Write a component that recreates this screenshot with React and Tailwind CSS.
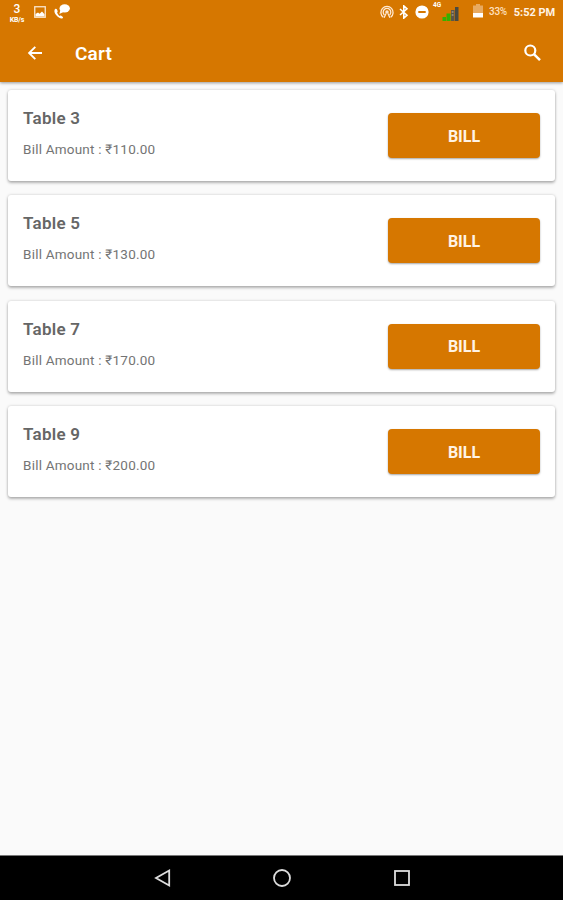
import React from 'react';

const tables = [
    { name: 'Table 3', amount: '110.00' },
    { name: 'Table 5', amount: '130.00' },
    { name: 'Table 7', amount: '170.00' },
    { name: 'Table 9', amount: '200.00' }
];

const StatusBar = () => (
    <div className="flex h-6 items-start justify-between pl-[9px] pr-2 text-white">
        <div className="flex items-start">
            <div className="flex w-4 flex-col items-center pt-[2px]">
                <span className="text-[12px] leading-[14px] font-medium">3</span>
                <span className="text-[7px] leading-[8px] font-bold -tracking-[0.1px] -mt-[1px] pt-[1px]">KB/s</span>
            </div>
            <svg className="mt-[6px] ml-[9px] h-3 w-3" viewBox="0 0 12 12" fill="none">
                <rect x="0.75" y="0.75" width="10.5" height="10.5" stroke="#fbe6cf" strokeWidth="1.3" />
                <path d="M1.500 10.500V8l2.500-1.500 1.600 1.300L8 5.500l2.500 2.700v2.300z" fill="#fff" />
            </svg>
            <svg className="mt-1 ml-2 h-[15px] w-4" viewBox="0 0 16 15" fill="#fff">
                <path d="M1.2 5C-.1 6 .2 8.600 2.100 11c2 2.500 4.300 3.700 6.100 3.400 1-.2 1-1.100.4-1.600l-1.300-1c-.6-.4-1-.2-1.500.2C4.600 11.400 3.500 10 3.100 8.500c.4-.4.7-.7.500-1.400L3 5.600C2.600 4.800 2 4.500 1.200 5z" />
                <ellipse cx="10.700" cy="4.400" rx="5.200" ry="4.100" />
                <path d="M6.300 6 5.400 9.900 9.500 8z" />
            </svg>
        </div>
        <div className="flex items-start">
            <svg className="mt-[5px] h-[14px] w-[14px]" viewBox="0 0 14 14" fill="none" stroke="#ffe9d2" strokeWidth="1.300">
                <path d="M3.300 12.300a6.100 6.100 0 1 1 7.400 0" />
                <path d="M4.400 10a3.800 3.800 0 1 1 5.200 0" />
                <circle cx="7" cy="7" r="1.100" fill="#ffe9d2" />
                <path d="M6 8.500 4.100 12.800M8 8.500l1.900 4.300" />
            </svg>
            <svg className="mt-[5px] ml-[3px] h-[14px] w-[14px]" viewBox="0 0 14 14" fill="none" stroke="#fff" strokeWidth="1.600">
                <path d="m3 4 7 6.200-3.200 2.900V.900L10 3.800 3 10" />
            </svg>
            <svg className="mt-[5px] ml-1 h-[14px] w-[14px]" viewBox="0 0 14 14">
                <circle cx="7" cy="7" r="6.600" fill="#fff" />
                <rect x="3.300" y="6" width="7.400" height="2" fill="#d67700" />
            </svg>
            <span className="mt-[2px] ml-[4px] w-[9px] text-[6.500px] leading-[6px] font-bold">4G</span>
            <svg className="mt-[6px] h-[15px] w-[17px]" viewBox="0 0 17 15">
                <rect x="0.500" y="11" width="3.500" height="4" fill="#35b000" />
                <rect x="4.500" y="7.500" width="4" height="7.500" fill="#35b000" />
                <rect x="9" y="4" width="3.500" height="11" fill="#5c5648" />
                <path d="M9.700 6h1.800M9.700 9h1.800" stroke="#c8b8a0" />
                <rect x="13" y="1" width="3.500" height="14" fill="#494a42" />
            </svg>
            <svg className="mt-[4px] ml-[14px] h-[14px] w-[10px]" viewBox="0 0 10 14">
                <path d="M3 0h4v1.500h3V9H0V1.500h3z" fill="#e8aa61" />
                <path d="M0 9h10v4.500H0z" fill="#fff" />
            </svg>
            <span className="mt-[6px] ml-[6px] w-[19px] text-[10px] leading-3 font-medium tracking-[-0.3px] whitespace-nowrap text-[#ffe0bf]">33%</span>
            <span className="mt-[6px] ml-[5px] w-[42px] text-right text-[11px] leading-[13px] font-bold tracking-[-0.05px] whitespace-nowrap text-[#fff3e5]">5:52 PM</span>
        </div>
    </div>
);

const TableCard = ({ name, amount }) => (
    <div className="flex h-[91px] justify-between rounded-[3px] bg-white px-[15px] shadow-[0_2px_3px_rgba(0,0,0,0.26),0_0_3px_rgba(0,0,0,0.18)]">
        <div className="pt-[17px]">
            <h2 className="text-[17px] leading-[22px] font-semibold tracking-[0.25px] text-[#666]">{name}</h2>
            <p className="mt-[11px] text-[13.5px] leading-[18px] tracking-[0.22px] text-[#747474]">Bill Amount : ₹{amount}</p>
        </div>
        <button className="mt-[23px] h-[45px] w-[152px] rounded-[4px] bg-[#d67700] pt-[2px] text-[16px] font-bold text-[#fff3e5] shadow-[0_1px_2px_rgba(0,0,0,0.35)]">
            BILL
        </button>
    </div>
);

const App = () => {
    return (
        <div className="flex h-[900px] w-[563px] flex-col overflow-hidden bg-[#fafafa] font-['Roboto','Noto_Sans',sans-serif]">
            <header className="h-[82px] shrink-0 bg-[#d67700] shadow-[0_1px_3px_rgba(0,0,0,0.4)]">
                <StatusBar />
                <div className="flex h-[58px] items-center pr-5 pl-[25px] text-white">
                    <svg className="h-5 w-5" viewBox="0 0 20 20" fill="none" stroke="currentColor" strokeWidth="1.9">
                        <path d="M17 10H4.500M10.300 3.800 4.100 10l6.200 6.200" />
                    </svg>
                    <h1 className="ml-[30px] pt-[2px] text-[19px] leading-6 font-semibold tracking-[0.2px]">Cart</h1>
                    <svg className="ml-auto h-[22px] w-[22px]" viewBox="0 0 22 22" fill="none" stroke="currentColor" strokeWidth="2.2">
                        <circle cx="9.300" cy="8.500" r="5" />
                        <path d="m12.900 12.100 6.100 6.100" strokeWidth="2.500" />
                    </svg>
                </div>
            </header>

            <main className="flex flex-1 flex-col gap-[14.45px] px-2 pt-2">
                {tables.map(table => (
                    <TableCard key={table.name} name={table.name} amount={table.amount} />
                ))}
            </main>

            <nav className="flex h-[45px] shrink-0 items-center justify-center gap-[100px] border-t border-[#777] bg-black">
                <svg className="h-5 w-5" viewBox="0 0 20 20" fill="none" stroke="#ddd" strokeWidth="1.800">
                    <path d="M17.200 2.500v15L4 10z" />
                </svg>
                <svg className="h-5 w-5" viewBox="0 0 20 20" fill="none" stroke="#ddd" strokeWidth="1.800">
                    <circle cx="10" cy="10" r="8" />
                </svg>
                <svg className="h-5 w-5" viewBox="0 0 20 20" fill="none" stroke="#ddd" strokeWidth="1.800">
                    <rect x="3" y="3" width="14" height="14" />
                </svg>
            </nav>
        </div>
    );
};

export default App;
